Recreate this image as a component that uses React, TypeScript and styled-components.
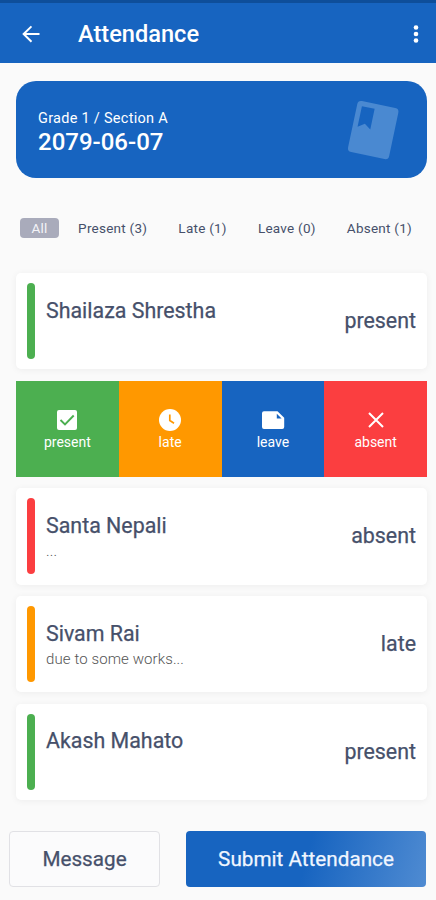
import React from "react";
import styled, { createGlobalStyle } from "styled-components";

const GlobalStyle = createGlobalStyle`
  * { box-sizing: border-box; }
  body { margin: 0; background: #fafafa; font-family: Roboto, "Liberation Sans", sans-serif; }
  button { font-family: inherit; margin: 0; padding: 0; cursor: pointer; }
`;

const BLUE = "#1764c0";
const GREEN = "#4caf50";
const ORANGE = "#ff9800";
const RED = "#fb3e40";
const INK = "#46506a";

const Screen = styled.div`
  width: 436px;
  height: 900px;
  overflow: hidden;
  display: flex;
  flex-direction: column;
  background: #fafafa;
  color: ${INK};
`;

const AppBar = styled.header`
  height: 63px;
  flex: none;
  display: flex;
  align-items: center;
  padding: 1px 15px 0 19px;
  border-top: 3px solid #0e4e9a;
  background: ${BLUE};
  color: #fff;
`;

const IconButton = styled.button`
  display: flex;
  border: 0;
  background: none;
  color: inherit;
`;

const Title = styled.h1`
  flex: 1;
  margin: 0 0 0 35px;
  font-size: 23.6px;
  line-height: 28px;
  font-weight: 500;
`;

const Banner = styled.section`
  height: 97px;
  flex: none;
  margin: 18px 9px 0 16px;
  padding: 3px 25px 0 22px;
  display: flex;
  align-items: center;
  justify-content: space-between;
  border-radius: 20px;
  background: ${BLUE};
  color: #fff;
`;

const ClassName = styled.div`
  padding-top: 1px;
  font-size: 14.5px;
  line-height: 20px;
  letter-spacing: 0.28px;
`;

const DateText = styled.div`
  font-size: 24px;
  line-height: 26px;
  font-weight: 500;
`;

const Tabs = styled.nav`
  height: 20px;
  flex: none;
  margin: 40px 24px 0 20px;
  display: flex;
  justify-content: space-between;
`;

const Tab = styled.button<{ $active?: boolean }>`
  height: 20px;
  width: ${(p) => (p.$active ? "39px" : "auto")};
  margin-right: ${(p) => (p.$active ? "-12px" : "0")};
  border: 0;
  border-radius: 4px;
  background: ${(p) => (p.$active ? "#a9abbb" : "transparent")};
  color: ${(p) => (p.$active ? "#f4f4f8" : INK)};
  font-size: 13.5px;
  letter-spacing: 0.25px;
  line-height: 20px;
  white-space: nowrap;
`;

const List = styled.main`
  flex: none;
  margin: 35px 9px 0 16px;
  display: flex;
  flex-direction: column;
  gap: 11.5px;
`;

const Card = styled.article`
  height: 96.2px;
  display: flex;
  padding: 10px 11px 10px;
  border-radius: 5px;
  background: #fff;
  box-shadow: 0 1px 7px rgba(0, 0, 0, 0.055);
`;

const Stripe = styled.div<{ $color: string }>`
  width: 8px;
  height: 76px;
  border-radius: 4px;
  background: ${(p) => p.$color};
`;

const Person = styled.div`
  flex: 1;
  padding: 14.5px 0 0 11px;
`;

const Name = styled.div`
  font-size: 21.4px;
  line-height: 26px;
  font-weight: 400;
  -webkit-text-stroke: 0.25px currentColor;
`;

const Note = styled.div`
  font-size: 15px;
  line-height: 20px;
  letter-spacing: 0.1px;
  margin-top: 2px;
  font-weight: 300;
  color: #555;
`;

const Status = styled.div`
  align-self: center;
  font-size: 21.4px;
  line-height: 26px;
  -webkit-text-stroke: 0.25px currentColor;
`;

const Actions = styled.div`
  height: 96.2px;
  display: grid;
  grid-template-columns: repeat(4, 1fr);
`;

const Action = styled.button<{ $color: string }>`
  display: flex;
  flex-direction: column;
  align-items: center;
  justify-content: center;
  padding-top: 1px;
  border: 0;
  background: ${(p) => p.$color};
  color: #fff;
  font-size: 14px;
  line-height: 18px;
  svg { display: block; }
`;

const Footer = styled.footer`
  flex: none;
  display: flex;
  justify-content: space-between;
  margin: 31px 10px 0 9px;
`;

const FooterButton = styled.button<{ $primary?: boolean }>`
  width: ${(p) => (p.$primary ? "240px" : "151px")};
  height: 56.5px;
  padding-bottom: 1px;
  border: ${(p) => (p.$primary ? "0" : "1px solid #e1e1e5")};
  border-radius: 4px;
  background: ${(p) => (p.$primary ? "linear-gradient(105deg, #1764c0 0%, #1764c0 50%, #4f8bd2 100%)" : "#fbfbfc")};
  color: ${(p) => (p.$primary ? "#f0f6ff" : INK)};
  font-size: 20.7px;
  -webkit-text-stroke: 0.25px currentColor;
`;

const BackIcon = () => (
  <svg width="24" height="24" viewBox="0 0 24 24" fill="currentColor">
    <path d="M20.5 11H7.1l6-6-1.3-1.3L3.2 12l8.6 8.5 1.4-1.4-6.1-6.2h13.4z" />
  </svg>
);

const MoreIcon = () => (
  <svg width="10" height="22" viewBox="0 0 10 22" fill="currentColor">
    <circle cx="5" cy="4.5" r="2.3" />
    <circle cx="5" cy="11" r="2.3" />
    <circle cx="5" cy="17.5" r="2.3" />
  </svg>
);

const BookIcon = () => (
  <svg width="60" height="64" viewBox="0 0 60 64">
    <g transform="rotate(12 31 32)">
      <path
        fill="#4a89d1"
        fillRule="evenodd"
        d="M14 5h34a4 4 0 0 1 4 4v44a4 4 0 0 1-4 4H14a4 4 0 0 1-4-4V9a4 4 0 0 1 4-4zM15 10v21l6.500-4.500 6.500 4.500V10z"
      />
    </g>
  </svg>
);

const CheckIcon = () => (
  <svg width="26" height="26" viewBox="0 0 26 26">
    <rect x="3" y="3" width="20" height="20" rx="2" fill="#fff" />
    <path d="M6.500 13l4.500 4.500L19.700 8.500" fill="none" stroke={GREEN} strokeWidth="1.900" />
  </svg>
);

const ClockIcon = () => (
  <svg width="26" height="26" viewBox="0 0 26 26">
    <circle cx="13" cy="13" r="11" fill="#fff" />
    <path d="M12.800 7.500V13.500L17 16.200" fill="none" stroke={ORANGE} strokeWidth="1.700" />
  </svg>
);

const NoteIcon = () => (
  <svg width="26" height="26" viewBox="0 0 26 26">
    <path
      fill="#fff"
      fillRule="evenodd"
      d="M4 4.300h13.500l6.700 6.500V20a2 2 0 0 1-2 2H4a2 2 0 0 1-2-2V6.300a2 2 0 0 1 2-2zM16.800 6.800v4.800h4.800z"
    />
  </svg>
);

const CloseIcon = () => (
  <svg width="26" height="26" viewBox="0 0 26 26">
    <path d="M6 6l14 14M20 6L6 20" stroke="#fff" strokeWidth="2" />
  </svg>
);

type StudentProps = { name: string; status: string; color: string; note?: string };

const Student = ({ name, status, color, note }: StudentProps) => (
  <Card>
    <Stripe $color={color} />
    <Person>
      <Name>{name}</Name>
      {note && <Note>{note}</Note>}
    </Person>
    <Status>{status}</Status>
  </Card>
);

export default function App() {
  return (
    <Screen>
      <GlobalStyle />
      <AppBar>
        <IconButton aria-label="Back"><BackIcon /></IconButton>
        <Title>Attendance</Title>
        <IconButton aria-label="More"><MoreIcon /></IconButton>
      </AppBar>
      <Banner>
        <div>
          <ClassName>Grade 1 / Section A</ClassName>
          <DateText>2079-06-07</DateText>
        </div>
        <BookIcon />
      </Banner>
      <Tabs>
        <Tab $active>All</Tab>
        <Tab>Present (3)</Tab>
        <Tab>Late (1)</Tab>
        <Tab>Leave (0)</Tab>
        <Tab>Absent (1)</Tab>
      </Tabs>
      <List>
        <Student name="Shailaza Shrestha" status="present" color={GREEN} />
        <Actions>
          <Action $color={GREEN}><CheckIcon />present</Action>
          <Action $color={ORANGE}><ClockIcon />late</Action>
          <Action $color={BLUE}><NoteIcon />leave</Action>
          <Action $color={RED}><CloseIcon />absent</Action>
        </Actions>
        <Student name="Santa Nepali" status="absent" color={RED} note="..." />
        <Student name="Sivam Rai" status="late" color={ORANGE} note="due to some works..." />
        <Student name="Akash Mahato" status="present" color={GREEN} />
      </List>
      <Footer>
        <FooterButton>Message</FooterButton>
        <FooterButton $primary>Submit Attendance</FooterButton>
      </Footer>
    </Screen>
  );
}
